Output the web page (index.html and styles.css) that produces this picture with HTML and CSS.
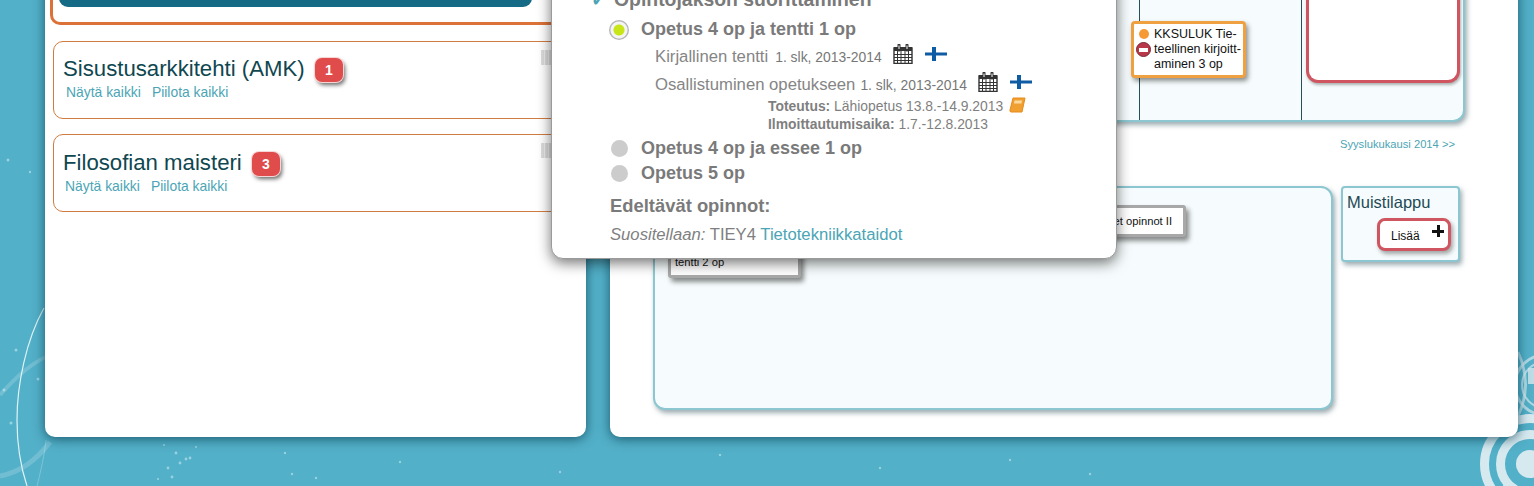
FILE: index.html
```html
<!DOCTYPE html>
<html lang="fi">
<head>
    <meta charset="UTF-8">
    <title>Opintosuunnitelma</title>
    <link rel="stylesheet" href="styles.css">
</head>
<body>
    <!-- background decoration -->
    <svg class="backdrop" width="1534" height="486" viewBox="0 0 1534 486">
        <g fill="none" stroke="#dff3f7">
            <path d="M44 308 C26 340 17 385 17 420 C17 445 21 468 27 486" stroke-width="1.2"/>
            <path d="M0 395 C15 378 30 364 46 357" stroke-width="4" stroke-opacity=".22"/>
            <path d="M0 476 C22 472 38 458 50 442" stroke-width="5" stroke-opacity=".22"/>
            <path d="M46 440 C44 458 40 474 37 486" stroke-width="1" stroke-opacity=".3"/>
        </g>
        <g fill="#dff3f7" fill-opacity=".5">
            <circle cx="8" cy="160" r="1.5"/><circle cx="30" cy="172" r="1.2"/><circle cx="16" cy="350" r="1.5"/>
            <circle cx="4" cy="390" r="1.5"/><circle cx="38" cy="379" r="1.5"/><circle cx="11" cy="423" r="1.5"/>
            <circle cx="176" cy="453" r="1.4"/><circle cx="186" cy="459" r="1.4"/><circle cx="168" cy="468" r="1.4"/>
            <circle cx="180" cy="463" r="1.4"/><circle cx="190" cy="458" r="1.4"/><circle cx="172" cy="477" r="1.4"/>
            <circle cx="164" cy="445" r="1.1"/><circle cx="196" cy="447" r="1.1"/><circle cx="158" cy="479" r="1.1"/>
            <circle cx="285" cy="453" r="1.2"/><circle cx="292" cy="474" r="1.2"/><circle cx="316" cy="478" r="1.2"/>
            <circle cx="400" cy="462" r="1.2"/><circle cx="560" cy="472" r="1.2"/><circle cx="720" cy="455" r="1.2"/>
            <circle cx="880" cy="468" r="1.2"/><circle cx="1010" cy="460" r="1.2"/><circle cx="1090" cy="474" r="1.2"/>
        </g>
        <g fill="none" stroke="#d6e9ef">
            <circle cx="1530" cy="464" r="45.500" stroke-width="9"/>
            <circle cx="1530" cy="464" r="29.500" stroke-width="9"/>
            <circle cx="1510" cy="491" r="8" stroke-width="1.500"/>
            <path d="M1518 352 Q1533 385 1518 416" stroke-width="3" stroke-opacity=".7"/>
            <circle cx="1545" cy="385" r="30" stroke-width="3" stroke-opacity=".7"/>
            <circle cx="1545" cy="385" r="23" stroke-width="2" stroke-opacity=".7"/>
        </g>
        <circle cx="1530" cy="464" r="14" fill="#d6e9ef"/>
        <rect x="1528" y="368" width="6" height="16" fill="#d6e9ef" fill-opacity=".8"/>
    </svg>

    <div class="page">
        <section class="panel left-panel">
            <div class="degree degree-open">
                <div class="degree-bar"></div>
            </div>
            <div class="degree">
                <span class="grip"></span>
                <h2>Sisustusarkkitehti (AMK) <span class="badge">1</span></h2>
                <p class="toggles"><a>Näytä kaikki</a><a>Piilota kaikki</a></p>
            </div>
            <div class="degree degree-alt">
                <span class="grip"></span>
                <h2>Filosofian maisteri <span class="badge">3</span></h2>
                <p class="toggles toggles-alt"><a>Näytä kaikki</a><a>Piilota kaikki</a></p>
            </div>
        </section>

        <section class="panel right-panel">
            <div class="semester">
                <div class="sem-col sem-wide"></div>
                <div class="sem-col sem-mid">
                    <div class="course course-orange">
                        <div class="course-marks">
                            <span class="dot-orange"></span>
                            <span class="no-entry"></span>
                        </div>
                        <div>KKSULUK Tie-<br>teellinen kirjoitt-<br>aminen 3 op</div>
                    </div>
                </div>
                <div class="sem-col sem-last">
                    <div class="red-box"></div>
                </div>
            </div>
            <p class="next-link"><a>Syyslukukausi 2014 &gt;&gt;</a></p>
            <div class="lower">
                <div class="basket">
                    <div class="chip chip-a">tentti 2 op</div>
                    <div class="chip chip-b">Valinnaiset opinnot II</div>
                </div>
                <div class="note">
                    <h3>Muistilappu</h3>
                    <div class="add-btn">Lisää <span class="plus"></span></div>
                </div>
            </div>
        </section>
    </div>

    <div class="modal">
        <h4 class="modal-head"><span class="check">✓</span>Opintojakson suorittaminen</h4>

        <div class="option">
            <span class="radio radio-on"></span>
            <span>Opetus 4 op ja tentti 1 op</span>
        </div>
        <div class="part">
            <span class="part-name">Kirjallinen tentti</span>
            <span class="part-time">1. slk, 2013-2014</span>
            <svg class="cal" width="20" height="20" viewBox="0 0 20 20">
                <path d="M1 4h18v15.500H1z" fill="#fff" stroke="#333" stroke-width="1.400"/>
                <path d="M1 3h18v4H1z" fill="#333"/>
                <path d="M4.500 7v12M8 7v12M12 7v12M15.500 7v12M1 10.500h18M1 13.500h18M1 16.500h18" stroke="#333" stroke-width="1"/>
                <path d="M6 1v5M14 1v5" stroke="#333" stroke-width="3" stroke-linecap="round"/>
                <path d="M6 1.500v3.500M14 1.500v3.500" stroke="#fff" stroke-width="1"/>
            </svg>
            <svg class="flag" width="22" height="14" viewBox="0 0 22 14"><path d="M0 5.500h22v3H0zM7 0h4v14H7z" fill="#0f5ba4"/></svg>
        </div>
        <div class="part part-second">
            <span class="part-name">Osallistuminen opetukseen</span>
            <span class="part-time">1. slk, 2013-2014</span>
            <svg class="cal" width="20" height="20" viewBox="0 0 20 20">
                <path d="M1 4h18v15.500H1z" fill="#fff" stroke="#333" stroke-width="1.400"/>
                <path d="M1 3h18v4H1z" fill="#333"/>
                <path d="M4.500 7v12M8 7v12M12 7v12M15.500 7v12M1 10.500h18M1 13.500h18M1 16.500h18" stroke="#333" stroke-width="1"/>
                <path d="M6 1v5M14 1v5" stroke="#333" stroke-width="3" stroke-linecap="round"/>
                <path d="M6 1.500v3.500M14 1.500v3.500" stroke="#fff" stroke-width="1"/>
            </svg>
            <svg class="flag" width="22" height="14" viewBox="0 0 22 14"><path d="M0 5.500h22v3H0zM7 0h4v14H7z" fill="#0f5ba4"/></svg>
        </div>
        <div class="impl">
            <div><b>Toteutus:</b> Lähiopetus 13.8.-14.9.2013
                <svg class="book" width="17" height="16" viewBox="0 0 17 16">
                    <path d="M4 1h12l-3 14H2a1.500 1.500 0 0 1-1-2z" fill="#f0a030" stroke="#e88a1a"/>
                    <path d="M5.500 3.500h7.500l-.6 3H5z" fill="#fbd9a0"/>
                </svg>
            </div>
            <div class="impl-second"><b>Ilmoittautumisaika:</b> 1.7.-12.8.2013</div>
        </div>
        <div class="option option-next">
            <span class="radio"></span>
            <span>Opetus 4 op ja essee 1 op</span>
        </div>
        <div class="option option-last">
            <span class="radio"></span>
            <span>Opetus 5 op</span>
        </div>

        <h4 class="prereq">Edeltävät opinnot:</h4>
        <p class="prereq-row"><i>Suositellaan:</i> TIEY4 <a>Tietotekniikkataidot</a></p>
    </div>
</body>
</html>
```

FILE: styles.css
```css
html, body {
    margin: 0;
    height: 486px;
    overflow: hidden;
}
body {
    position: relative;
    background-color: #52b0c8;
    font-family: "Liberation Sans", Arial, sans-serif;
}
a {
    color: #4ba5b5;
}
.backdrop {
    position: absolute;
    left: 0;
    top: 0;
}
.page {
    position: relative;
    display: flex;
    gap: 24px;
    height: 497px;
    margin-top: -60px;
    padding: 0 16px 0 45px;
}
.panel {
    background: white;
    border-radius: 0 0 10px 10px;
    box-shadow: 0 2px 12px rgba(10,60,80,0.75);
    box-sizing: border-box;
}
.left-panel {
    width: 541px;
    padding: 0 8px;
}
.right-panel {
    width: 908px;
    padding: 0 52px 0 43px;
}

/* left column */
.degree {
    position: relative;
    height: 78px;
    margin-bottom: 15px;
    border: 1px solid #cf7c40;
    border-radius: 10px;
    box-sizing: border-box;
    padding: 14px 9px 0;
}
.degree-alt {
    padding-top: 15px;
}
.degree-open {
    height: 85px;
    margin: 0 0 16px -3px;
    border: 3px solid #dc7238;
    padding: 0 0 0 6px;
}
.degree-bar {
    height: 64px;
    width: 473px;
    background: #156b85;
    border-radius: 0 0 9px 9px;
}
.degree h2 {
    margin: 0;
    font-size: 22.200px;
    font-weight: normal;
    line-height: 26px;
    color: #0f4750;
}
.badge {
    display: inline-block;
    width: 28px;
    height: 24px;
    margin-left: 4px;
    background: #e04b4c;
    border-radius: 7px;
    box-shadow: 0 0 0 1px #f6d5d5, 2px 3px 4px rgba(0,0,0,0.6);
    color: white;
    font-size: 14px;
    font-weight: bold;
    line-height: 24px;
    text-align: center;
    vertical-align: 1px;
}
.toggles {
    margin: 2px 0 0 3px;
    font-size: 13.900px;
    line-height: 16px;
}
.toggles-alt {
    margin-left: 2px;
}
.toggles a {
    margin-right: 11px;
}
.grip {
    position: absolute;
    left: 487px;
    top: 8px;
    width: 10px;
    height: 15px;
    background: repeating-linear-gradient(90deg, #dcdcdc 0 3px, #eeeeee 3px 4px);
}

/* right column */
.semester {
    display: flex;
    height: 182px;
    margin-right: 1px;
    background: #f6fcfd;
    border: 2px solid #8cc7d1;
    border-top: none;
    border-radius: 0 0 12px 12px;
    box-shadow: 2px 3px 5px rgba(60,90,100,0.5);
    box-sizing: border-box;
}
.sem-col {
    border-left: 1px solid #27505c;
    box-sizing: border-box;
}
.sem-wide {
    width: 484px;
    border-left: none;
}
.sem-mid {
    width: 162px;
}
.sem-last {
    width: 162px;
    padding: 0 3px 0 4px;
}
.course {
    display: flex;
    gap: 3px;
    width: 115px;
    height: 57px;
    margin: 81px 0 0 -9px;
    padding: 3px 2px;
    background: white;
    border: 3px solid #efa040;
    border-radius: 4px;
    box-shadow: 2px 3px 5px rgba(0,0,0,0.45);
    box-sizing: border-box;
    font-size: 12.500px;
    line-height: 15px;
    white-space: nowrap;
    color: #111;
}
.course-marks {
    display: flex;
    flex-direction: column;
    align-items: center;
    gap: 3px;
    width: 15px;
    flex: none;
    padding-top: 2px;
}
.dot-orange {
    width: 10px;
    height: 10px;
    border-radius: 50%;
    background: #f59a35;
}
.no-entry {
    width: 15px;
    height: 15px;
    border-radius: 50%;
    background: linear-gradient(white, white) center/9px 4px no-repeat #b8384a;
    border: 1px solid #7c2832;
    box-sizing: border-box;
}
.red-box {
    height: 143px;
    background: white;
    border: 3px solid #cf5560;
    border-top: none;
    border-radius: 0 0 12px 12px;
    box-shadow: 1px 2px 3px rgba(0,0,0,0.3);
    box-sizing: border-box;
}
.next-link {
    margin: 15px 11px 0 0;
    height: 49px;
    font-size: 11.200px;
    line-height: 14px;
    text-align: right;
}
.lower {
    display: flex;
    align-items: flex-start;
    gap: 8px;
}
.basket {
    position: relative;
    display: flex;
    flex: none;
    width: 680px;
    height: 224px;
    background: #f6fcfd;
    border: 2px solid #8cc7d1;
    border-radius: 12px;
    box-shadow: 2px 3px 5px rgba(60,90,100,0.5);
    box-sizing: border-box;
}
.chip {
    height: 32px;
    background: white;
    border: 3px solid #a8a8a8;
    border-radius: 3px;
    box-shadow: 3px 4px 5px rgba(0,0,0,0.45);
    box-sizing: border-box;
    font-size: 11.200px;
    white-space: nowrap;
    color: #111;
}
.chip-a {
    width: 133px;
    height: 50px;
    margin: 40px 0 0 13px;
    padding: 25px 4px 0;
    line-height: 13px;
}
.chip-b {
    width: 120px;
    margin: 17px 0 0 265px;
    padding: 0 11px 0 0;
    line-height: 26px;
    text-align: right;
}
.note {
    width: 119px;
    height: 76px;
    background: #f6fcfd;
    border: 2px solid #8cc7d1;
    border-radius: 4px;
    box-shadow: 2px 3px 5px rgba(60,90,100,0.5);
    box-sizing: border-box;
    padding: 5px 8px 0 4px;
}
.note h3 {
    margin: 0 0 7px;
    font-size: 16.500px;
    font-weight: normal;
    line-height: 18px;
    color: #1f4a55;
}
.add-btn {
    position: relative;
    width: 74px;
    height: 33px;
    margin-left: auto;
    margin-right: -1px;
    background: white;
    border: 3px solid #cf5560;
    border-radius: 8px;
    box-shadow: 2px 3px 4px rgba(0,0,0,0.35);
    box-sizing: border-box;
    padding-left: 11px;
    font-size: 12px;
    line-height: 31px;
    color: #111;
}
.plus {
    position: absolute;
    right: 4px;
    top: 4px;
    width: 12px;
    height: 12px;
    background: linear-gradient(#111,#111) center/12px 3px no-repeat, linear-gradient(#111,#111) center/3px 12px no-repeat;
}

/* popup */
.modal {
    position: absolute;
    left: 551px;
    top: -30px;
    width: 566px;
    height: 289px;
    background: white;
    border: 1px solid #9a9a9a;
    border-radius: 12px;
    box-shadow: 0 4px 14px rgba(0,0,0,0.55);
    box-sizing: border-box;
    padding: 0 0 0 58px;
    color: #7a7a7a;
}
.modal-head {
    position: relative;
    margin: 17px 0 0;
    padding-left: 4px;
    font-size: 19.400px;
    line-height: 22px;
}
.check {
    position: absolute;
    left: -19px;
    color: #4ba5b5;
}
.option {
    display: flex;
    align-items: center;
    gap: 13px;
    margin-top: 7px;
    font-size: 18px;
    font-weight: bold;
    line-height: 25px;
}
.radio {
    width: 17px;
    height: 17px;
    flex: none;
    margin-left: 1px;
    border-radius: 50%;
    background: #cccccc;
}
.radio-on {
    width: 20px;
    height: 20px;
    margin: 0 -1px 0 -1px;
    background: radial-gradient(circle, #c8e617 0 5px, #f4f4f4 6px 8px, #b5b5b5 9px);
}
.part {
    display: flex;
    align-items: center;
    height: 24px;
    margin: 3px 0 0 45px;
}
.part-second {
    margin-top: 4px;
}
.part-name {
    font-size: 16.700px;
    color: #858585;
}
.part-time {
    margin-left: 7px;
    font-size: 13.900px;
    color: #777;
}
.part-second .part-time {
    margin-left: 5px;
}
.cal {
    margin-left: 11px;
    margin-top: -7px;
}
.flag {
    margin-left: 12px;
    margin-top: -6px;
}
.impl {
    margin: 0 0 0 158px;
    font-size: 13.900px;
    line-height: 17px;
    color: #7f7f7f;
}
.impl-second {
    margin-top: 1px;
}
.book {
    margin-left: 2px;
    vertical-align: -2px;
}
.option-next {
    margin-top: 3px;
}
.option-last {
    margin-top: 0;
}
.prereq {
    margin: 8px 0 0;
    font-size: 18.400px;
    line-height: 24px;
}
.prereq-row {
    margin: 5px 0 0;
    font-size: 16.660px;
    line-height: 24px;
    color: #7f7f7f;
}
```
